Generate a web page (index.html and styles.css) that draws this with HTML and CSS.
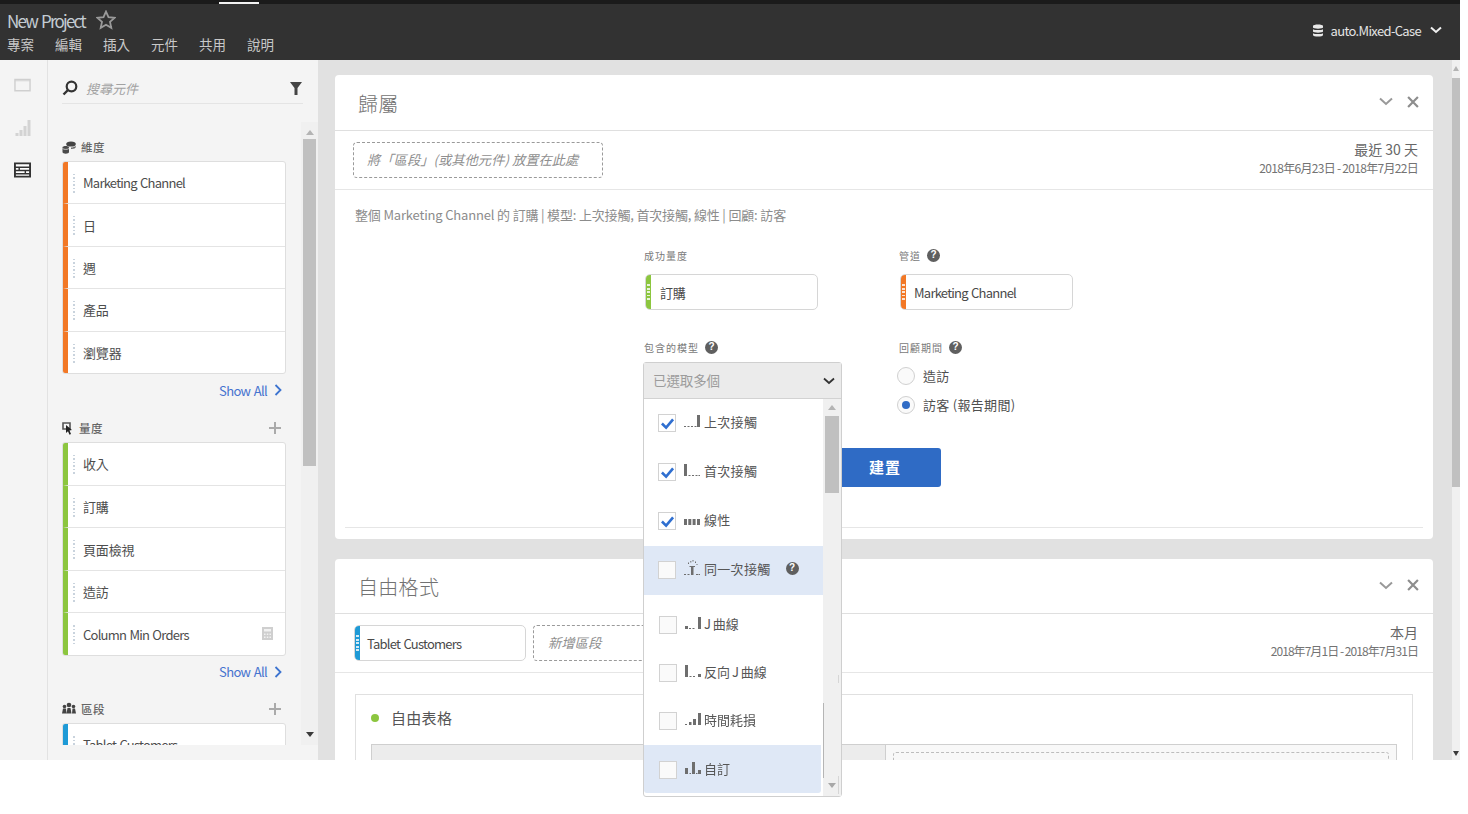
FILE: index.html
```html
<!DOCTYPE html>
<html lang="zh-Hant">
<head>
<meta charset="utf-8">
<title>New Project</title>
<link rel="stylesheet" href="styles.css">
</head>
<body>
<div class="app">
  <header class="topbar">
    <div class="topstrip"><span class="tab-mark"></span></div>
    <div class="topmain">
      <div class="top-left">
        <div class="project">
          <span class="project-name">New Project</span>
          <svg class="star" viewBox="0 0 20 20"><path d="M10 1.6l2.500 5.600 6.100.6-4.600 4.100 1.300 6-5.300-3.100-5.300 3.100 1.300-6L1.400 7.800l6.100-.6z" fill="none" stroke="#9a9a9a" stroke-width="1.800"/></svg>
        </div>
        <nav class="menu"><span>專案</span><span>編輯</span><span>插入</span><span>元件</span><span>共用</span><span>說明</span></nav>
      </div>
      <div class="account">
        <svg class="db" viewBox="0 0 10 13"><path d="M0 2c0-2 10-2 10 0v1.500c0 1.500-10 1.500-10 0zM0 5.200c2 1.200 8 1.200 10 0v2.300c0 1.500-10 1.500-10 0zM0 9.200c2 1.200 8 1.200 10 0V11c0 2-10 2-10 0z" fill="#e8e8e8"/></svg>
        <span>auto.Mixed-Case</span>
        <svg class="chev-top" viewBox="0 0 12 8"><path d="M1 1.500l5 4.500 5-4.500" fill="none" stroke="#f0f0f0" stroke-width="2"/></svg>
      </div>
    </div>
  </header>

  <div class="workspace">
    <aside class="rail">
      <svg class="rail-icon" viewBox="0 0 18 14"><path d="M1 1h16v12H1z" fill="none" stroke="#cfcfcf" stroke-width="1.500"/><path d="M1 2.500h16" stroke="#cfcfcf"/></svg>
      <svg class="rail-icon" viewBox="0 0 16 16"><path d="M1 13h3v3H1zM5 10h3v6H5zM9 6h3v10H9zM13 0h3v16h-3z" fill="#d3d3d3"/></svg>
      <svg class="rail-icon" viewBox="0 0 18 16"><path d="M1 1h16v14H1z" fill="#fff" stroke="#333" stroke-width="2"/><path d="M1 5h16M1 8.500h16M1 12h16" stroke="#333" stroke-width="1.500"/><path d="M5.500 5v3.500M12 8.500V12" stroke="#333" stroke-width="1.500"/></svg>
    </aside>

    <section class="components">
      <div class="search">
        <svg class="search-glass" viewBox="0 0 16 16"><circle cx="9.500" cy="6.500" r="4.800" fill="none" stroke="#333" stroke-width="2.200"/><path d="M6 10l-4.500 4.500" stroke="#333" stroke-width="2.400"/></svg>
        <span class="search-text">搜尋元件</span>
        <svg class="funnel" viewBox="0 0 12 13"><path d="M0 0h12L7.500 6v7h-3V6z" fill="#444"/></svg>
      </div>
      <div class="comp-scroll">
        <div class="comp-list">
          <div class="comp-head">
            <svg class="head-icon" viewBox="0 0 14 13"><ellipse cx="9" cy="3" rx="4.800" ry="2.600" fill="#444"/><path d="M9 6.500c2 0 4-.6 4.800-1.500v1c0 1-2 2-4.800 2z" fill="#666"/><path d="M.5 6.500C.5 4.500 7 4.500 7 6.500v4.500c0 2.200-6.500 2.200-6.500 0z" fill="#4a4a4a"/><path d="M.5 7.500c1.500 1.200 5 1.200 6.500 0" fill="none" stroke="#ddd" stroke-width=".8"/></svg>
            <span>維度</span>
          </div>
          <div class="card dims">
            <div class="row dim latin"><i class="grip"></i>Marketing Channel</div>
            <div class="row dim"><i class="grip"></i>日</div>
            <div class="row dim"><i class="grip"></i>週</div>
            <div class="row dim"><i class="grip"></i>產品</div>
            <div class="row dim"><i class="grip"></i>瀏覽器</div>
          </div>
          <div class="show-all">Show All<svg class="chev-right" viewBox="0 0 8 12"><path d="M1.500 1l5 5-5 5" fill="none" stroke="#3d74d0" stroke-width="1.800"/></svg></div>

          <div class="comp-head">
            <svg class="head-icon narrow" viewBox="0 0 11 13"><path d="M1 1h7v6H1z" fill="none" stroke="#555" stroke-width="1.600"/><path d="M4 3l6 5-2.500.5L9 12l-1.500.8-1.500-3.600L4 11z" fill="#222"/></svg>
            <span>量度</span>
            <svg class="plus" viewBox="0 0 12 12"><path d="M6 0v12M0 6h12" stroke="#aaa" stroke-width="2"/></svg>
          </div>
          <div class="card metrics">
            <div class="row met"><i class="grip"></i>收入</div>
            <div class="row met"><i class="grip"></i>訂購</div>
            <div class="row met"><i class="grip"></i>頁面檢視</div>
            <div class="row met"><i class="grip"></i>造訪</div>
            <div class="row met latin"><i class="grip"></i>Column Min Orders
              <svg class="calc" viewBox="0 0 11 13"><path d="M0 0h11v13H0z" fill="#cfcfcf"/><path d="M2 2h7v2.500H2zM2 6.500h1.500V8H2zM4.800 6.500h1.500V8H4.800zM7.500 6.500H9V8H7.500zM2 9.500h1.500V11H2zM4.800 9.500h1.500V11H4.800zM7.500 9.500H9V11H7.500z" fill="#f2f2f2"/></svg>
            </div>
          </div>
          <div class="show-all">Show All<svg class="chev-right" viewBox="0 0 8 12"><path d="M1.500 1l5 5-5 5" fill="none" stroke="#3d74d0" stroke-width="1.800"/></svg></div>

          <div class="comp-head">
            <svg class="head-icon" viewBox="0 0 14 12"><circle cx="7" cy="2.500" r="2.300" fill="#444"/><circle cx="2.500" cy="4" r="1.800" fill="#444"/><circle cx="11.500" cy="4" r="1.800" fill="#444"/><path d="M0 11l1-5h3l.5 5zM4.500 11l1-5.500h3l1 5.500zM10 11l.5-5h2.500l1 5z" fill="#444"/></svg>
            <span>區段</span>
            <svg class="plus" viewBox="0 0 12 12"><path d="M6 0v12M0 6h12" stroke="#aaa" stroke-width="2"/></svg>
          </div>
          <div class="card">
            <div class="row seg latin"><i class="grip"></i>Tablet Customers</div>
          </div>
        </div>
        <div class="comp-bar">
          <span class="arrow up"></span>
          <span class="comp-thumb"></span>
          <span class="arrow down dark"></span>
        </div>
      </div>
    </section>

    <main class="canvas">
      <div class="panels">
        <article class="panel attribution">
          <div class="panel-head">
            <h2>歸屬</h2>
            <div class="panel-tools">
              <svg viewBox="0 0 14 9"><path d="M1 1.500l6 5.500 6-5.500" fill="none" stroke="#999" stroke-width="2"/></svg>
              <svg viewBox="0 0 11 11"><path d="M1 1l9 9M10 1l-9 9" stroke="#8d8d8d" stroke-width="2"/></svg>
            </div>
          </div>
          <div class="seg-row">
            <div class="drop-zone wide">將「區段」(或其他元件) 放置在此處</div>
            <div class="range">
              <div class="range-name">最近 30 天</div>
              <div class="range-dates">2018年6月23日 - 2018年7月22日</div>
            </div>
          </div>
          <div class="panel-body">
            <p class="summary">整個 Marketing Channel 的 訂購 | 模型: 上次接觸, 首次接觸, 線性 | 回顧: 訪客</p>
            <div class="form">
              <div class="form-cell">
                <div class="lbl">成功量度</div>
                <div class="chip met"><i class="chip-grip"></i>訂購</div>
              </div>
              <div class="form-cell">
                <div class="lbl">管道<span class="help">?</span></div>
                <div class="chip dim latin"><i class="chip-grip"></i>Marketing Channel</div>
              </div>
              <div class="form-cell lower">
                <div class="lbl">包含的模型<span class="help">?</span></div>
                <div class="select-anchor">
                  <div class="select">
                    <div class="select-head">
                      <span>已選取多個</span>
                      <svg viewBox="0 0 12 8"><path d="M1 1.500l5 4.500 5-4.500" fill="none" stroke="#333" stroke-width="1.800"/></svg>
                    </div>
                    <div class="select-body">
                      <ul class="options">
                        <li class="opt"><span class="box on"><svg viewBox="0 0 16 14"><path d="M2 7l4.500 4.500L14 2.500" fill="none" stroke="#2f6fd0" stroke-width="2.800"/></svg></span><svg class="mini" viewBox="0 0 16 12"><path d="M0 11h2v1H0zM3.500 11h2v1h-2zM7 11h2v1H7zM10.500 11h2v1h-2zM13 0h3v12h-3z" fill="#6e6e6e"/></svg>上次接觸</li>
                        <li class="opt"><span class="box on"><svg viewBox="0 0 16 14"><path d="M2 7l4.500 4.500L14 2.500" fill="none" stroke="#2f6fd0" stroke-width="2.800"/></svg></span><svg class="mini" viewBox="0 0 16 12"><path d="M0 0h3v12H0zM4.500 11h2v1h-2zM8 11h2v1H8zM11.500 11h2v1h-2zM14.500 11H16v1h-1.500z" fill="#6e6e6e"/></svg>首次接觸</li>
                        <li class="opt"><span class="box on"><svg viewBox="0 0 16 14"><path d="M2 7l4.500 4.500L14 2.500" fill="none" stroke="#2f6fd0" stroke-width="2.800"/></svg></span><svg class="mini" viewBox="0 0 16 12"><path d="M0 6h3v6H0zM4.300 6h3v6h-3zM8.600 6h3v6h-3zM13 6h3v6h-3z" fill="#6e6e6e"/></svg>線性</li>
                        <li class="opt hot"><span class="box"></span><svg class="mini tall" viewBox="0 0 16 15"><path d="M0 14h2v1H0zM3.500 14h2v1h-2zM7 6h2.500v9H7zM5.500 6h5.500v1H5.500zM12 14h2v1h-2zM14.500 14H16v1h-1.500zM4 2.500h1v1.500H4zM6.300 1h1v1.500h-1zM8.500 0h1v1.500h-1zM11 1.500h1V3h-1zM12.500 4h1v1h-1z" fill="#6e6e6e"/></svg>同一次接觸<span class="help opt-help">?</span></li>
                        <li class="opt low first-low"><span class="box"></span><svg class="mini" viewBox="0 0 16 12"><path d="M0 9h3v3H0zM4 11h2v1H4zM7.500 11h2v1h-2zM13 0h3v12h-3z" fill="#6e6e6e"/></svg>J 曲線</li>
                        <li class="opt low"><span class="box"></span><svg class="mini" viewBox="0 0 16 12"><path d="M0 0h3v12H0zM4.500 11h2v1h-2zM8 11h2v1H8zM13 9h3v3h-3z" fill="#6e6e6e"/></svg>反向 J 曲線</li>
                        <li class="opt low"><span class="box"></span><svg class="mini" viewBox="0 0 16 12"><path d="M0 11h2v1H0zM4 9h2.500v3H4zM8 6h3v6H8zM13 0h3v12h-3z" fill="#6e6e6e"/></svg>時間耗損</li>
                        <li class="opt low hot"><span class="box"></span><svg class="mini" viewBox="0 0 16 12"><path d="M0 6h3v6H0zM4.500 11h1.500v1H4.500zM7 0h3v12H7zM11 11h1.500v1H11zM13 8h3v4h-3z" fill="#6e6e6e"/></svg>自訂</li>
                      </ul>
                      <div class="select-bar">
                        <span class="arrow up"></span>
                        <span class="select-thumb"></span>
                        <span class="select-tick"></span>
                        <span class="arrow down"></span>
                      </div>
                      <span class="stray-line"></span>
                    </div>
                  </div>
                </div>
              </div>
              <div class="form-cell lower">
                <div class="lbl">回顧期間<span class="help">?</span></div>
                <div class="radios">
                  <div class="radio-row"><span class="radio"></span>造訪</div>
                  <div class="radio-row"><span class="radio on"></span>訪客 (報告期間)</div>
                </div>
              </div>
              <div class="build-row"><button class="build">建置</button></div>
            </div>
            <div class="body-rule"></div>
          </div>
        </article>

        <article class="panel freeform">
          <div class="panel-head">
            <h2>自由格式</h2>
            <div class="panel-tools">
              <svg viewBox="0 0 14 9"><path d="M1 1.500l6 5.500 6-5.500" fill="none" stroke="#999" stroke-width="2"/></svg>
              <svg viewBox="0 0 11 11"><path d="M1 1l9 9M10 1l-9 9" stroke="#8d8d8d" stroke-width="2"/></svg>
            </div>
          </div>
          <div class="seg-row">
            <div class="chip seg slim latin"><i class="chip-grip"></i>Tablet Customers</div>
            <div class="drop-zone narrow">新增區段</div>
            <div class="range">
              <div class="range-name">本月</div>
              <div class="range-dates tight">2018年7月1日 - 2018年7月31日</div>
            </div>
          </div>
          <div class="free-body">
            <div class="table-card">
              <div class="table-title"><span class="dot"></span>自由表格</div>
              <div class="table-head">
                <div class="th-left"></div>
                <div class="th-right"><div class="th-drop"></div></div>
              </div>
            </div>
          </div>
        </article>
      </div>
      <div class="page-bar">
        <span class="arrow up small"></span>
        <span class="page-thumb"></span>
        <span class="arrow down dark small"></span>
      </div>
    </main>
  </div>
</div>
</body>
</html>
```

FILE: styles.css
```css
* { box-sizing: border-box; }
html, body { margin: 0; padding: 0; background: #fff; }
body {
  min-height: 814px;
  font-family: "Noto Sans CJK TC", "Noto Sans", sans-serif;
  color: #4b4b4b;
}
.app {
  width: 1460px;
  height: 760px;
  display: flex;
  flex-direction: column;
  filter: blur(0.3px);
}

/* top bar */
.topbar { height: 60px; flex: none; background: #323232; color: #d8d8d8; }
.topstrip { height: 4px; background: #1b1b1b; position: relative; }
.tab-mark { position: absolute; left: 219px; top: 2px; width: 40px; height: 2px; background: #f2f2f2; }
.topmain { height: 56px; display: flex; justify-content: space-between; padding: 0 18px 0 7px; }
.project { height: 32px; display: flex; align-items: center; gap: 11px; }
.project-name { font-size: 17px; letter-spacing: -1.800px; word-spacing: 2px; color: #c4ccd2; }
.star { width: 20px; height: 20px; }
.menu { display: flex; gap: 21px; font-size: 13.500px; line-height: 17px; color: #c8c8c8; }
.account { display: flex; align-items: center; height: 52px; font-size: 13px; letter-spacing: -0.660px; color: #e4e4e4; }
.db { width: 10px; height: 13px; margin-right: 8px; }
.chev-top { width: 12px; height: 8px; margin-left: 9px; }

/* layout */
.workspace { flex: 1; min-height: 0; display: flex; }
.rail {
  width: 48px; flex: none;
  background: #f4f4f4;
  border-right: 1px solid #e2e2e2;
  padding: 17px 0 0 14px;
  display: flex; flex-direction: column; gap: 26.500px;
}
.rail-icon { width: 17px; height: 16px; display: block; }

/* component panel */
.components { width: 270px; flex: none; background: #f4f4f4; display: flex; flex-direction: column; padding-bottom: 15px; }
.search {
  height: 44px; flex: none; width: 241px; margin-left: 14px;
  border-bottom: 1px solid #e4e4e4;
  display: flex; align-items: center; padding: 13px 1px 0 0;
}
.search-glass { width: 16px; height: 16px; }
.search-text { font-size: 13px; font-style: italic; color: #a2a2a2; margin-left: 8px; flex: 1; }
.funnel { width: 12px; height: 13px; }
.comp-scroll { flex: 1; min-height: 0; display: flex; margin-top: 18px; }
.comp-list { width: 253px; flex: none; padding: 15px 0 0 14px; overflow: hidden; }
.comp-head {
  width: 224px; height: 20px; margin-bottom: 4px;
  display: flex; align-items: center; gap: 5px;
  font-size: 11.500px; font-weight: 500; color: #666; letter-spacing: .4px;
}
.comp-head span { flex: 1; }
.head-icon { width: 14px; height: 13px; }
.head-icon.narrow { width: 11px; margin-right: 1px; }
.plus { width: 12px; height: 12px; margin-right: 5px; }
.card {
  width: 224px; background: #fff;
  border: 1px solid #dedede; border-radius: 3px; overflow: hidden;
}
.row {
  height: 42.600px; position: relative;
  border-left: 5px solid #f27826;
  border-bottom: 1px solid #e4e4e4;
  display: flex; align-items: center;
  padding-left: 15px;
  font-size: 13px; letter-spacing: -.15px; color: #4d4d4d;
}
.card.dims .row { height: 42.400px; }
.row:last-child, .card.dims .row:last-child { border-bottom: 0; height: 41.500px; }
.row.met { border-left-color: #8cc63f; }
.row.seg { border-left-color: #1e9ad6; }
.row.latin, .chip.latin { letter-spacing: -.75px; word-spacing: 1px; }
.grip {
  position: absolute; left: 5px; top: 12px;
  width: 2px; height: 19px;
  background: repeating-linear-gradient(to bottom, #c9d3dd 0 1.500px, transparent 1.500px 3.500px);
}
.calc { width: 11px; height: 13px; position: absolute; right: 12px; top: 14px; }
.show-all {
  width: 224px; height: 34px; margin-bottom: 10px;
  display: flex; align-items: center; justify-content: flex-end; gap: 7px;
  padding: 0 4px 2px 0;
  font-size: 13px; letter-spacing: -.65px; word-spacing: 1px; color: #4673cf;
}
.card.metrics + .show-all { margin-bottom: 9px; }
.chev-right { width: 8px; height: 12px; }
.comp-bar {
  width: 17px; flex: none; background: #f0f0f0;
  display: flex; flex-direction: column; align-items: center;
  padding: 8px 0;
}
.comp-thumb { width: 13px; height: 327px; background: #c0c0c0; margin-top: 4px; }
.comp-bar .arrow.down { margin-top: auto; }

.arrow { width: 0; height: 0; border-left: 4px solid transparent; border-right: 4px solid transparent; flex: none; }
.arrow.up { border-bottom: 5px solid #b4b4b4; }
.arrow.down { border-top: 5px solid #a8a8a8; }
.arrow.dark { border-top-color: #3a3a3a; }
.arrow.small { border-left-width: 3px; border-right-width: 3px; }

/* main canvas */
.canvas { flex: 1; min-width: 0; display: flex; background: #e1e1e1; }
.panels { flex: 1; min-width: 0; padding: 15px 19px 0 17px; display: flex; flex-direction: column; gap: 20px; }
.page-bar { width: 8px; flex: none; background: #f0f0f0; display: flex; flex-direction: column; align-items: center; padding: 6px 0 4px; }
.page-thumb { width: 8px; height: 409px; background: #c0c0c0; margin-top: 7px; }
.page-bar .arrow.down { margin-top: auto; }

.panel { background: #fff; border-radius: 4px; flex: none; }
.attribution { height: 464px; position: relative; z-index: 2; }
.freeform { height: 201px; overflow: hidden; border-radius: 4px 4px 0 0; }
.panel-head {
  height: 56px; border-bottom: 1px solid #dfdfdf;
  display: flex; align-items: center; justify-content: space-between;
  padding: 0 14px 0 23px;
}
.freeform .panel-head { height: 55px; }
.panel-head h2 { margin: 0; font-size: 20px; font-weight: 300; letter-spacing: .3px; color: #727272; }
.attribution .panel-head h2 { margin-top: 2px; }
.panel-tools { display: flex; align-items: center; gap: 14px; margin-top: -2px; }
.panel-tools svg:first-child { width: 14px; height: 9px; }
.panel-tools svg:last-child { width: 12px; height: 12px; }
.seg-row {
  height: 59px; border-bottom: 1px solid #e6e6e6;
  display: flex; align-items: center; gap: 7px;
  padding: 0 15px 0 18px;
}
.drop-zone {
  height: 36px; border: 1px dashed #9a9a9a; border-radius: 4px;
  display: flex; align-items: center;
  padding-bottom: 2px;
  font-size: 13.300px; font-style: italic; color: #8f8f8f;
}
.drop-zone.wide { width: 250px; padding-left: 13px; }
.drop-zone.narrow { width: 120px; padding-left: 14px; }
.range { margin-left: auto; margin-bottom: 4px; text-align: right; }
.range-name { font-size: 14px; line-height: 19px; color: #666; }
.range-dates { font-size: 12px; line-height: 17px; letter-spacing: -.7px; color: #737373; }
.range-dates.tight { letter-spacing: -.95px; }

.panel-body { position: relative; height: 349px; padding: 16px 0 0 20px; }
.summary { margin: 0; font-size: 13px; line-height: 18px; letter-spacing: -.17px; color: #8c8c8c; }
.form { display: grid; grid-template-columns: 255px 255px; margin: 23px 0 0 289px; }
.form-cell { display: flex; flex-direction: column; }
.form-cell.lower { margin-top: 29px; }
.lbl { height: 16px; display: flex; align-items: center; gap: 6px; font-size: 10px; letter-spacing: 1px; color: #7a7a7a; }
.help {
  width: 13px; height: 13px; border-radius: 50%; background: #5f5f5f; color: #fff;
  display: inline-flex; align-items: center; justify-content: center;
  font: 700 10px/1 "Liberation Sans", sans-serif; letter-spacing: 0;
}
.chip {
  width: 173px; height: 36px; margin: 11px 0 0 1px;
  background: #fff; border: 1px solid #d6d6d6; border-radius: 5px;
  display: flex; align-items: center; position: relative;
  font-size: 13px; letter-spacing: -.15px; color: #4a4a4a;
  overflow: hidden;
}
.chip.met { padding-left: 14px; }
.chip.dim { padding-left: 13px; }
.chip.seg { padding-left: 12px; }
.chip.slim { width: 172px; margin: 0 0 0 1px; flex: none; }
.chip-grip { position: absolute; left: 0; top: 0; bottom: 0; width: 5px; background: #f27826; }
.chip.met .chip-grip { background: #8cc63f; }
.chip.seg .chip-grip { background: #1e9ad6; }
.chip-grip::after {
  content: ""; position: absolute; left: 1px; top: 9px; width: 3px; height: 17px;
  background: repeating-linear-gradient(to bottom, rgba(255,255,255,.8) 0 2px, transparent 2px 3.500px);
}
.select-anchor { position: relative; height: 65px; }
.select {
  position: absolute; left: -1px; top: 7px; width: 199px; height: 435px; z-index: 5;
  background: #fff; border: 1px solid #cfcfcf; border-radius: 3px;
  display: flex; flex-direction: column;
}
.select-head {
  height: 36px; flex: none; background: #ebebeb; border-bottom: 1px solid #d2d2d2;
  display: flex; align-items: center; justify-content: space-between;
  padding: 0 6px 2px 9px;
  font-size: 13.500px; letter-spacing: -.1px; color: #9c9c9c;
}
.select-head svg { width: 12px; height: 8px; margin-top: 2px; }
.select-body { flex: 1; min-height: 0; display: flex; position: relative; }
.options { list-style: none; margin: 0; padding: 0; width: 179px; flex: none; }
.opt {
  height: 49px; display: flex; align-items: center;
  padding: 0 0 5px 14px;
  font-size: 13px; letter-spacing: .3px; color: #565656;
}
.opt.hot { background: #dfe8f6; }
.opt.low { height: 48px; width: 177px; padding: 0 0 2px 15px; letter-spacing: 0; word-spacing: -1px; }
.first-low { margin-top: 5px; }
.opt.low.hot { height: 48px; margin-top: 1px; border-radius: 0 0 3px 3px; }
.box {
  width: 18px; height: 18px; flex: none; margin: 4px 8px 0 0;
  background: #fafafa; border: 1px solid #d2d2d2;
  display: flex; align-items: center; justify-content: center;
}
.box.on { background: #fff; }
.box svg { width: 15px; height: 13px; }
.mini { width: 16px; height: 12px; margin-right: 4px; flex: none; }
.mini.tall { height: 15px; margin-top: -2px; }
.opt.low .mini { margin-right: 3px; }
.opt-help { margin-left: 15px; }
.select-bar {
  flex: 1; background: #f0f0f0; position: relative;
  display: flex; flex-direction: column; align-items: center; padding: 6px 0 8px;
}
.select-thumb { width: 14px; height: 77px; background: #c0c0c0; margin-top: 6px; }
.select-tick { position: absolute; right: 2px; top: 276px; width: 1px; height: 8px; background: #d6d6d6; }
.select-bar::after { content: ""; position: absolute; right: 2px; bottom: 2px; width: 1px; height: 18px; background: #d6d6d6; }
.select-bar .arrow.down { margin-top: auto; }
.stray-line { position: absolute; left: 179px; top: 304px; width: 1px; height: 75px; background: #b5b5b5; }
.radios { display: flex; flex-direction: column; margin-top: 6px; }
.radio-row { height: 29px; display: flex; align-items: center; gap: 8px; font-size: 13px; letter-spacing: .3px; color: #4f4f4f; }
.radio {
  width: 18px; height: 18px; border-radius: 50%; margin-left: -2px;
  background: #fafafa; border: 1px solid #d0d0d0; position: relative;
}
.radio.on::after {
  content: ""; position: absolute; left: 4px; top: 4px;
  width: 8px; height: 8px; border-radius: 50%; background: #2f6bc5;
}
.build-row { grid-column: 1 / 3; margin-top: 28px; }
.build {
  display: block; width: 141px; height: 39px; margin-left: 156px; padding: 0 0 2px 29px;
  border: 0; border-radius: 3px; background: #2f6bc5; color: #fff;
  font: 700 15px "Noto Sans CJK TC", sans-serif; letter-spacing: 1px;
}
.body-rule { position: absolute; left: 10px; right: 10px; top: 337px; height: 1px; background: #e6e6e6; }

.free-body { padding: 21px 20px 0; }
.table-card { height: 200px; border: 1px solid #e0e0e0; padding: 0 15px; }
.table-title { height: 45px; margin-bottom: 4px; display: flex; align-items: center; font-size: 15px; letter-spacing: .3px; color: #555; }
.dot { width: 8px; height: 8px; border-radius: 50%; background: #8cc63f; margin-right: 12px; }
.table-head { display: flex; height: 120px; border: 1px solid #cfcfcf; }
.th-left { width: 513px; background: #ececec; }
.th-right { flex: 1; background: #f8f8f8; border-left: 1px solid #cfcfcf; padding: 7px 7px 0; }
.th-drop { height: 60px; border: 1px dashed #bdbdbd; border-radius: 3px; }
```
